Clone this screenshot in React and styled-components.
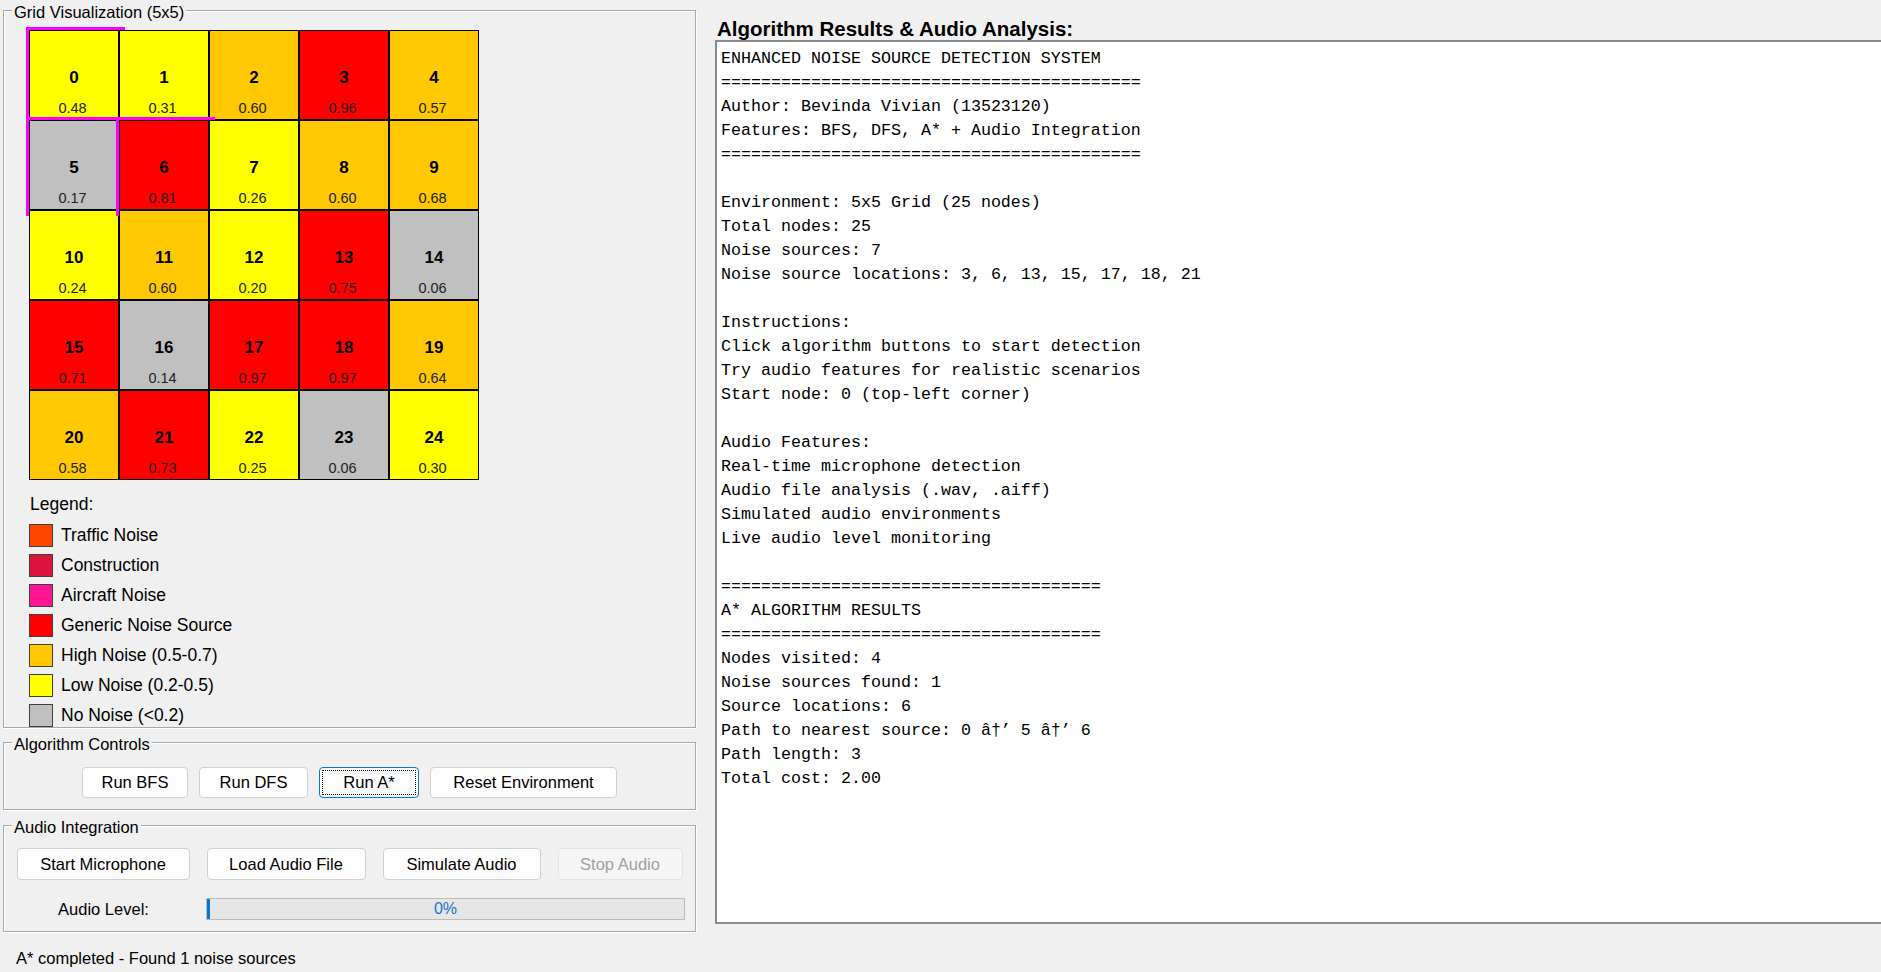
import React from "react";
import styled, { createGlobalStyle } from "styled-components";

const GlobalStyle = createGlobalStyle`
  body {
    margin: 0;
    background: #f0f0f0;
    font-family: "Liberation Sans", Arial, sans-serif;
    color: #000;
    overflow: hidden;
  }
`;

const Window = styled.div`
  display: flex;
  height: 972px;
  width: 1881px;
`;

const LeftColumn = styled.div`
  width: 693px;
  margin-left: 3px;
  padding-top: 10px;
  display: flex;
  flex-direction: column;
  flex-shrink: 0;
`;

const Group = styled.div`
  box-sizing: border-box;
  display: flex;
  flex-direction: column;
  border: 1px solid #a8a8a8;
  box-shadow: inset 1px 1px 0 #fff, 1px 1px 0 #fff;
  height: ${(p) => (p.$height ? `${p.$height}px` : "auto")};
  margin-top: ${(p) => p.$top || 0}px;
  padding-bottom: ${(p) => p.$bottom || 0}px;
`;

const GroupBody = styled.div`
  flex: 1;
  min-height: 0;
  overflow: hidden;
`;

const Caption = styled.div`
  margin: -9px 0 0 8px;
  padding: 0 2px;
  width: fit-content;
  background: #f0f0f0;
  font-size: 16.5px;
  line-height: 20px;
`;

const Grid = styled.div`
  display: grid;
  grid-template-columns: repeat(5, 90px);
  margin: 8px 0 0 25px;
  width: fit-content;
`;

const Cell = styled.div`
  position: relative;
  box-sizing: border-box;
  height: 90px;
  border: 1px solid #000;
  background: ${(p) => p.$bg};
  display: flex;
  flex-direction: column;
  align-items: center;
  padding-top: 37px;

  ${(p) =>
    p.$path &&
    `
    &::before {
      content: "";
      position: absolute;
      top: -4px;
      left: -4px;
      width: 96px;
      height: 96px;
      border-top: 3px solid #ff00ff;
      border-left: 3px solid #ff00ff;
      z-index: 2;
      pointer-events: none;
    }
  `}
`;

const CellId = styled.div`
  font-size: 17px;
  font-weight: bold;
  line-height: 20px;
`;

const CellValue = styled.div`
  margin-top: 11px;
  font-size: 14.5px;
  line-height: 18px;
  color: #222;
  padding-right: 3px;
`;

const LegendTitle = styled.div`
  margin: 12px 0 4px 26px;
  font-size: 17.5px;
  line-height: 24px;
`;

const LegendRow = styled.div`
  display: flex;
  align-items: center;
  gap: 8px;
  height: 30px;
  margin-left: 25px;
`;

const Swatch = styled.div`
  box-sizing: border-box;
  width: 24px;
  height: 23px;
  border: 1px solid #404040;
  background: ${(p) => p.$color};
  flex-shrink: 0;
`;

const LegendLabel = styled.span`
  font-size: 17.5px;
`;

const ButtonRow = styled.div`
  display: flex;
  justify-content: center;
  gap: ${(p) => p.$gap}px;
  margin-top: ${(p) => p.$top}px;
`;

const Button = styled.button`
  box-sizing: border-box;
  width: ${(p) => p.$w}px;
  height: ${(p) => p.$h}px;
  font-family: "Liberation Sans", Arial, sans-serif;
  font-size: 16.5px;
  color: #000;
  background: #fdfdfd;
  border: 1px solid #d0d0d0;
  border-radius: 4px;
  padding: 0;
  ${(p) =>
    p.$focused &&
    `
    border-color: #0078d7;
    outline: 1px dotted #000;
    outline-offset: -4px;
  `}
  &:disabled {
    color: #a0a0a0;
    background: #f5f5f5;
    border-color: #e3e3e3;
  }
`;

const LevelRow = styled.div`
  display: flex;
  align-items: center;
  gap: 16px;
  margin: 18px 0 0 13px;
`;

const LevelLabel = styled.div`
  width: 173px;
  text-align: center;
  font-size: 16.5px;
`;

const Progress = styled.div`
  position: relative;
  box-sizing: border-box;
  width: 479px;
  height: 22px;
  border: 1px solid #bcbcbc;
  background: #e6e6e6;
  display: flex;
  align-items: center;
  justify-content: center;
`;

const ProgressFill = styled.div`
  position: absolute;
  left: 0;
  top: 0;
  bottom: 0;
  background: #0078d7;
`;

const ProgressText = styled.span`
  font-size: 16px;
  color: #1a73c9;
`;

const StatusText = styled.div`
  margin: 16px 0 0 13px;
  font-size: 16.5px;
  line-height: 20px;
`;

const RightColumn = styled.div`
  flex: 1;
  margin-left: 19px;
  padding-top: 17px;
  display: flex;
  flex-direction: column;
  min-width: 0;
`;

const ResultsTitle = styled.div`
  font-size: 20.5px;
  font-weight: bold;
  line-height: 23px;
  padding-left: 2px;
`;

const ResultsBox = styled.pre`
  box-sizing: border-box;
  margin: 0;
  height: 884px;
  background: #fff;
  border: 2px solid #868a94;
  border-right: none;
  padding: 5px 4px;
  font-family: "Liberation Mono", "Courier New", monospace;
  font-size: 16.67px;
  line-height: 24px;
  color: #000;
  overflow: hidden;
`;

const Y = "#ffff00";
const O = "#ffc800";
const R = "#ff0000";
const G = "#c0c0c0";

const cells = [
  [0.48, Y], [0.31, Y], [0.6, O], [0.96, R], [0.57, O],
  [0.17, G], [0.81, R], [0.26, Y], [0.6, O], [0.68, O],
  [0.24, Y], [0.6, O], [0.2, Y], [0.75, R], [0.06, G],
  [0.71, R], [0.14, G], [0.97, R], [0.97, R], [0.64, O],
  [0.58, O], [0.73, R], [0.25, Y], [0.06, G], [0.3, Y],
];

const path = [0, 5, 6];

const legend = [
  ["#ff4500", "Traffic Noise"],
  ["#dc143c", "Construction"],
  ["#ff1493", "Aircraft Noise"],
  ["#ff0000", "Generic Noise Source"],
  ["#ffc800", "High Noise (0.5-0.7)"],
  ["#ffff00", "Low Noise (0.2-0.5)"],
  ["#c0c0c0", "No Noise (<0.2)"],
];

const results = `ENHANCED NOISE SOURCE DETECTION SYSTEM
==========================================
Author: Bevinda Vivian (13523120)
Features: BFS, DFS, A* + Audio Integration
==========================================

Environment: 5x5 Grid (25 nodes)
Total nodes: 25
Noise sources: 7
Noise source locations: 3, 6, 13, 15, 17, 18, 21

Instructions:
Click algorithm buttons to start detection
Try audio features for realistic scenarios
Start node: 0 (top-left corner)

Audio Features:
Real-time microphone detection
Audio file analysis (.wav, .aiff)
Simulated audio environments
Live audio level monitoring

======================================
A* ALGORITHM RESULTS
======================================
Nodes visited: 4
Noise sources found: 1
Source locations: 6
Path to nearest source: 0 â†’ 5 â†’ 6
Path length: 3
Total cost: 2.00`;

export default function App() {
  const level = 0;
  return (
    <>
      <GlobalStyle />
      <Window>
        <LeftColumn>
          <Group $height={718}>
            <Caption>Grid Visualization (5x5)</Caption>
            <GroupBody>
              <Grid>
                {cells.map(([v, bg], i) => (
                  <Cell key={i} $bg={bg} $path={path.includes(i)}>
                    <CellId>{i}</CellId>
                    <CellValue>{v.toFixed(2)}</CellValue>
                  </Cell>
                ))}
              </Grid>
              <LegendTitle>Legend:</LegendTitle>
              {legend.map(([c, label]) => (
                <LegendRow key={label}>
                  <Swatch $color={c} />
                  <LegendLabel>{label}</LegendLabel>
                </LegendRow>
              ))}
            </GroupBody>
          </Group>

          <Group $top={14} $bottom={11}>
            <Caption>Algorithm Controls</Caption>
            <ButtonRow $gap={11} $top={13}>
              <Button $w={106} $h={31}>Run BFS</Button>
              <Button $w={109} $h={31}>Run DFS</Button>
              <Button $w={100} $h={31} $focused>Run A*</Button>
              <Button $w={187} $h={31}>Reset Environment</Button>
            </ButtonRow>
          </Group>

          <Group $top={15} $bottom={11}>
            <Caption>Audio Integration</Caption>
            <ButtonRow $gap={17} $top={11}>
              <Button $w={173} $h={32}>Start Microphone</Button>
              <Button $w={159} $h={32}>Load Audio File</Button>
              <Button $w={158} $h={32}>Simulate Audio</Button>
              <Button $w={125} $h={32} disabled>Stop Audio</Button>
            </ButtonRow>
            <LevelRow>
              <LevelLabel>Audio Level:</LevelLabel>
              <Progress>
                <ProgressFill style={{ width: `${Math.max(3, level * 4.79)}px` }} />
                <ProgressText>{level}%</ProgressText>
              </Progress>
            </LevelRow>
          </Group>

          <StatusText>A* completed - Found 1 noise sources</StatusText>
        </LeftColumn>

        <RightColumn>
          <ResultsTitle>Algorithm Results &amp; Audio Analysis:</ResultsTitle>
          <ResultsBox>{results}</ResultsBox>
        </RightColumn>
      </Window>
    </>
  );
}
